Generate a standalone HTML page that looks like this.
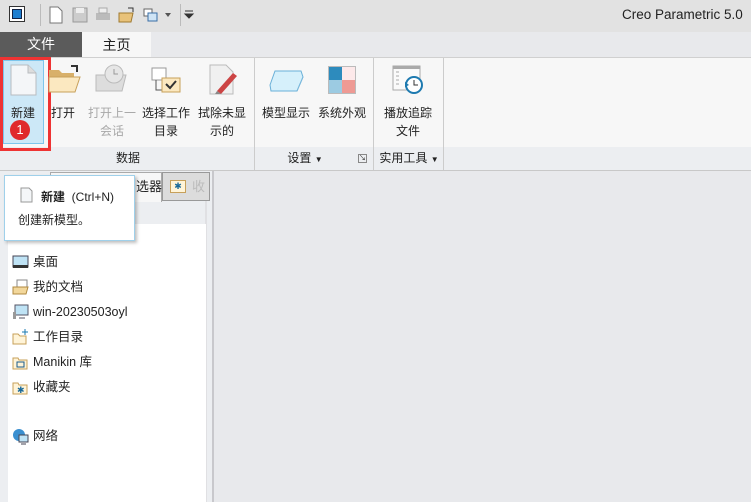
<!DOCTYPE html>
<html><head><meta charset="utf-8"><style>
*{margin:0;padding:0;box-sizing:border-box}
body{width:751px;height:502px;overflow:hidden;background:#e8e9ec;font-family:"Liberation Sans","Noto Sans CJK SC",sans-serif;font-size:12px;color:#222;position:relative}
.abs{position:absolute}
.lbl{position:absolute;text-align:center;font-size:12px;line-height:18px;color:#222}
.dis{color:#a8a8a8}
.li{position:absolute;left:12px;font-size:12.5px;height:18px;line-height:18px;display:flex;align-items:center}
.li svg{margin-right:4px}
</style></head><body>
<div class="abs" style="left:0;top:0;width:751px;height:32px;background:#e2e2e2"></div>
<div class="abs" style="left:9px;top:6px;width:16px;height:16px;border:1px solid #333;background:#fff"><div style="position:absolute;left:2px;top:2px;width:10px;height:10px;background:#1e7fd0;border:1px solid #124"></div></div>
<div class="abs" style="left:40px;top:4px;width:1px;height:22px;background:#bbb"></div>
<svg class="abs" style="left:48px;top:5px" width="150" height="20">
<path d="M2 2h8l4 4v12H2z" fill="#fff" stroke="#777"/>
<rect x="25" y="3" width="14" height="14" fill="#ccc" stroke="#999"/><rect x="28" y="3" width="8" height="5" fill="#eee"/>
<rect x="48" y="8" width="14" height="7" fill="#bbb"/><rect x="51" y="3" width="8" height="5" fill="#eee" stroke="#aaa"/>
<path d="M71 8h14l-2 9H71z" fill="#e8c27a" stroke="#a07a30"/><path d="M80 3l5 0 0 4" stroke="#333" fill="none"/>
<rect x="96" y="4" width="8" height="7" fill="#fff" stroke="#666"/><rect x="100" y="8" width="9" height="8" fill="#cfe4f5" stroke="#3a6ea5"/>
<path d="M117 8h6l-3 4z" fill="#555"/>
<path d="M137 6h8M137 9h8l-4 4z" fill="#333" stroke="#333"/>
</svg>
<div class="abs" style="left:180px;top:4px;width:1px;height:22px;background:#bbb"></div>
<div class="abs" style="left:622px;top:7px;font-size:13.5px;color:#222">Creo Parametric 5.0</div>
<div class="abs" style="left:0;top:32px;width:82px;height:25px;background:#5b5b5b;color:#fff;font-size:14px;text-align:center;line-height:25px">文件</div>
<div class="abs" style="left:82px;top:32px;width:69px;height:26px;background:#f7f7f7;font-size:14px;text-align:center;line-height:26px">主页</div>
<div class="abs" style="left:0;top:57px;width:751px;height:114px;background:#f7f7f7;border-top:1px solid #d0d0d0;border-bottom:1px solid #c8c8c8"></div>
<div class="abs" style="left:0;top:147px;width:751px;height:23px;background:#eceef1"></div>
<div class="abs" style="left:254px;top:58px;width:1px;height:112px;background:#ccc"></div>
<div class="abs" style="left:373px;top:58px;width:1px;height:112px;background:#ccc"></div>
<div class="abs" style="left:443px;top:58px;width:1px;height:112px;background:#ccc"></div>
<div class="lbl" style="left:100px;top:149px;width:56px">数据</div>
<div class="lbl" style="left:280px;top:149px;width:50px">设置 <span style="font-size:8px">▼</span></div>
<div class="abs" style="left:358px;top:154px;width:9px;height:9px;border:1px solid #888;font-size:7px;line-height:7px;text-align:center">↘</div>
<div class="lbl" style="left:374px;top:149px;width:70px">实用工具 <span style="font-size:8px">▼</span></div>
<div class="abs" style="left:3px;top:60px;width:41px;height:84px;background:#cce8f7;border:1px solid #7dc6ec"></div>
<div class="abs" style="left:0;top:57px;width:51px;height:94px;border:3px solid #ee3333"></div>
<svg class="abs" style="left:10px;top:64px" width="28" height="32"><path d="M1 1h17l8 8v22H1z" fill="#f4f6f8" stroke="#b8bcc0"/><path d="M18 1v8h8" fill="#ddd" stroke="#b8bcc0"/></svg>
<div class="lbl" style="left:5px;top:104px;width:36px">新建</div>
<div class="abs" style="left:10px;top:120px;width:20px;height:20px;border-radius:50%;background:#e0292c;color:#fff;font-size:13px;text-align:center;line-height:20px">1</div>
<svg class="abs" style="left:47px;top:62px" width="34" height="34"><path d="M2 8h10l3 3h12v18H2z" fill="#d8b06a"/><path d="M2 15h31l-5 15H2z" fill="#fbe8c0" stroke="#c7a05a"/><path d="M24 4h6v6" stroke="#333" stroke-width="2" fill="none"/></svg>
<div class="lbl" style="left:48px;top:104px;width:30px">打开</div>
<svg class="abs" style="left:94px;top:63px" width="34" height="32"><path d="M2 12h30l-4 16H2z" fill="#ddd" stroke="#bbb"/><circle cx="20" cy="11" r="9" fill="#e6e6e6" stroke="#bbb"/><path d="M20 6v5h4" stroke="#999" fill="none"/></svg>
<div class="lbl dis" style="left:86px;top:104px;width:52px">打开上一<br>会话</div>
<svg class="abs" style="left:150px;top:64px" width="34" height="32"><rect x="2" y="4" width="14" height="12" fill="#fff" stroke="#999"/><path d="M6 16v10h6" stroke="#555" fill="none"/><rect x="12" y="14" width="18" height="14" fill="#fbe8c0" stroke="#c7a05a"/><path d="M16 20l4 4 6-7" stroke="#333" stroke-width="2" fill="none"/></svg>
<div class="lbl" style="left:140px;top:104px;width:52px">选择工作<br>目录</div>
<svg class="abs" style="left:207px;top:63px" width="34" height="34"><path d="M3 2h16l7 7v22H3z" fill="#f0f0f0" stroke="#bbb"/><path d="M10 28l16-18 4 3-16 18z" fill="#c44"/><path d="M8 31l2-3 4 3z" fill="#888"/></svg>
<div class="lbl" style="left:196px;top:104px;width:52px">拭除未显<br>示的</div>
<svg class="abs" style="left:269px;top:69px" width="36" height="24"><path d="M6 2h26l2 6-6 14H2L1 16z" fill="#d6f0fb" stroke="#6ab0d8"/><path d="M28 22l6-14" stroke="#7ab8dc"/></svg>
<div class="lbl" style="left:260px;top:104px;width:52px">模型显示</div>
<div class="abs" style="left:328px;top:66px;width:28px;height:28px;border:1px solid #bbb">
<div style="position:absolute;left:0;top:0;width:13px;height:13px;background:#2d8bbd"></div><div style="position:absolute;left:13px;top:0;width:13px;height:13px;background:#fde9ea"></div><div style="position:absolute;left:0;top:13px;width:13px;height:13px;background:#9ccbe2"></div><div style="position:absolute;left:13px;top:13px;width:13px;height:13px;background:#ee9a94"></div></div>
<div class="lbl" style="left:316px;top:104px;width:52px">系统外观</div>
<svg class="abs" style="left:392px;top:65px" width="34" height="30"><rect x="1" y="1" width="27" height="24" fill="#fafafa" stroke="#aaa"/><rect x="1" y="1" width="27" height="3" fill="#aaa"/><path d="M4 7h3M4 11h3M4 15h3M4 19h3" stroke="#aaa"/><circle cx="22" cy="20" r="8" fill="#fff" stroke="#1e7ab0" stroke-width="2"/><path d="M22 15v5h4" stroke="#333" fill="none"/><path d="M13 17l4 3-4 2z" fill="#1e7ab0"/></svg>
<div class="lbl" style="left:382px;top:104px;width:52px">播放追踪<br>文件</div>
<div class="abs" style="left:0;top:171px;width:213px;height:331px;background:#eceef1"></div>
<div class="abs" style="left:212px;top:171px;width:2px;height:331px;background:#c8c8cc"></div>
<div class="abs" style="left:205px;top:200px;width:2px;height:302px;background:#e0e0e3"></div>
<div class="abs" style="left:50px;top:172px;width:112px;height:30px;background:#f7f7f7;border:1px solid #aaa;border-bottom:none"></div>
<div class="abs" style="left:136px;top:176px;font-size:13px">选器</div>
<div class="abs" style="left:162px;top:172px;width:48px;height:29px;background:#dcdcdc;border:1px solid #999"></div>
<div class="abs" style="left:170px;top:180px;width:16px;height:13px;background:#fff4d8;border:1px solid #c7a05a;color:#1a6a9a;font-size:9px;text-align:center;line-height:11px">✱</div>
<div class="abs" style="left:192px;top:176px;font-size:13px;color:#bbb">收</div>
<div class="abs" style="left:8px;top:224px;width:198px;height:278px;background:#fff"></div>
<div class="li" style="top:253px"><svg width="17" height="14"><rect x="1" y="1" width="15" height="11" fill="#bfe3f5" stroke="#445"/><rect x="1" y="10" width="15" height="3" fill="#333"/></svg>桌面</div>
<div class="li" style="top:278px"><svg width="17" height="16"><rect x="5" y="1" width="10" height="10" fill="#fff" stroke="#888"/><path d="M1 8h15l-2 7H1z" fill="#f2d79b" stroke="#b08a40"/></svg>我的文档</div>
<div class="li" style="top:303px"><svg width="17" height="16"><rect x="3" y="1" width="13" height="10" fill="#bfe3f5" stroke="#556"/><rect x="1" y="8" width="3" height="7" fill="#999"/><path d="M7 14h6" stroke="#556"/></svg>win-20230503oyl</div>
<div class="li" style="top:328px"><svg width="17" height="16"><path d="M1 5h5l2 2h6v8H1z" fill="#fff4d8" stroke="#c7a05a"/><path d="M13 0v6M10 3h6" stroke="#1a7ab0"/></svg>工作目录</div>
<div class="li" style="top:353px"><svg width="17" height="16"><path d="M1 4h5l1 2h8v9H1z" fill="#fff4d8" stroke="#c7a05a"/><rect x="5" y="8" width="7" height="5" fill="none" stroke="#1a5a8a"/></svg>Manikin 库</div>
<div class="li" style="top:378px"><svg width="17" height="16"><path d="M1 4h5l1 2h8v9H1z" fill="#fff4d8" stroke="#c7a05a"/><text x="5" y="14" font-size="9" fill="#1a6a9a">✱</text></svg>收藏夹</div>
<div class="li" style="top:427px"><svg width="17" height="17"><circle cx="7" cy="7" r="6" fill="#3a8fd0"/><rect x="7" y="7" width="9" height="7" fill="#bfe3f5" stroke="#445"/><path d="M9 16h5" stroke="#445"/></svg>网络</div>
<div class="abs" style="left:4px;top:175px;width:131px;height:66px;background:#fff;border:1px solid #9fd0ea;box-shadow:2px 2px 3px rgba(0,0,0,.25)"></div>
<svg class="abs" style="left:20px;top:187px" width="13" height="16"><path d="M1 1h8l3 3v11H1z" fill="#f4f6f8" stroke="#999"/></svg>
<div class="abs" style="left:41px;top:188px;font-size:12px"><b>新建</b>&nbsp;&nbsp;(Ctrl+N)</div>
<div class="abs" style="left:18px;top:211px;font-size:12px">创建新模型。</div>
</body></html>
